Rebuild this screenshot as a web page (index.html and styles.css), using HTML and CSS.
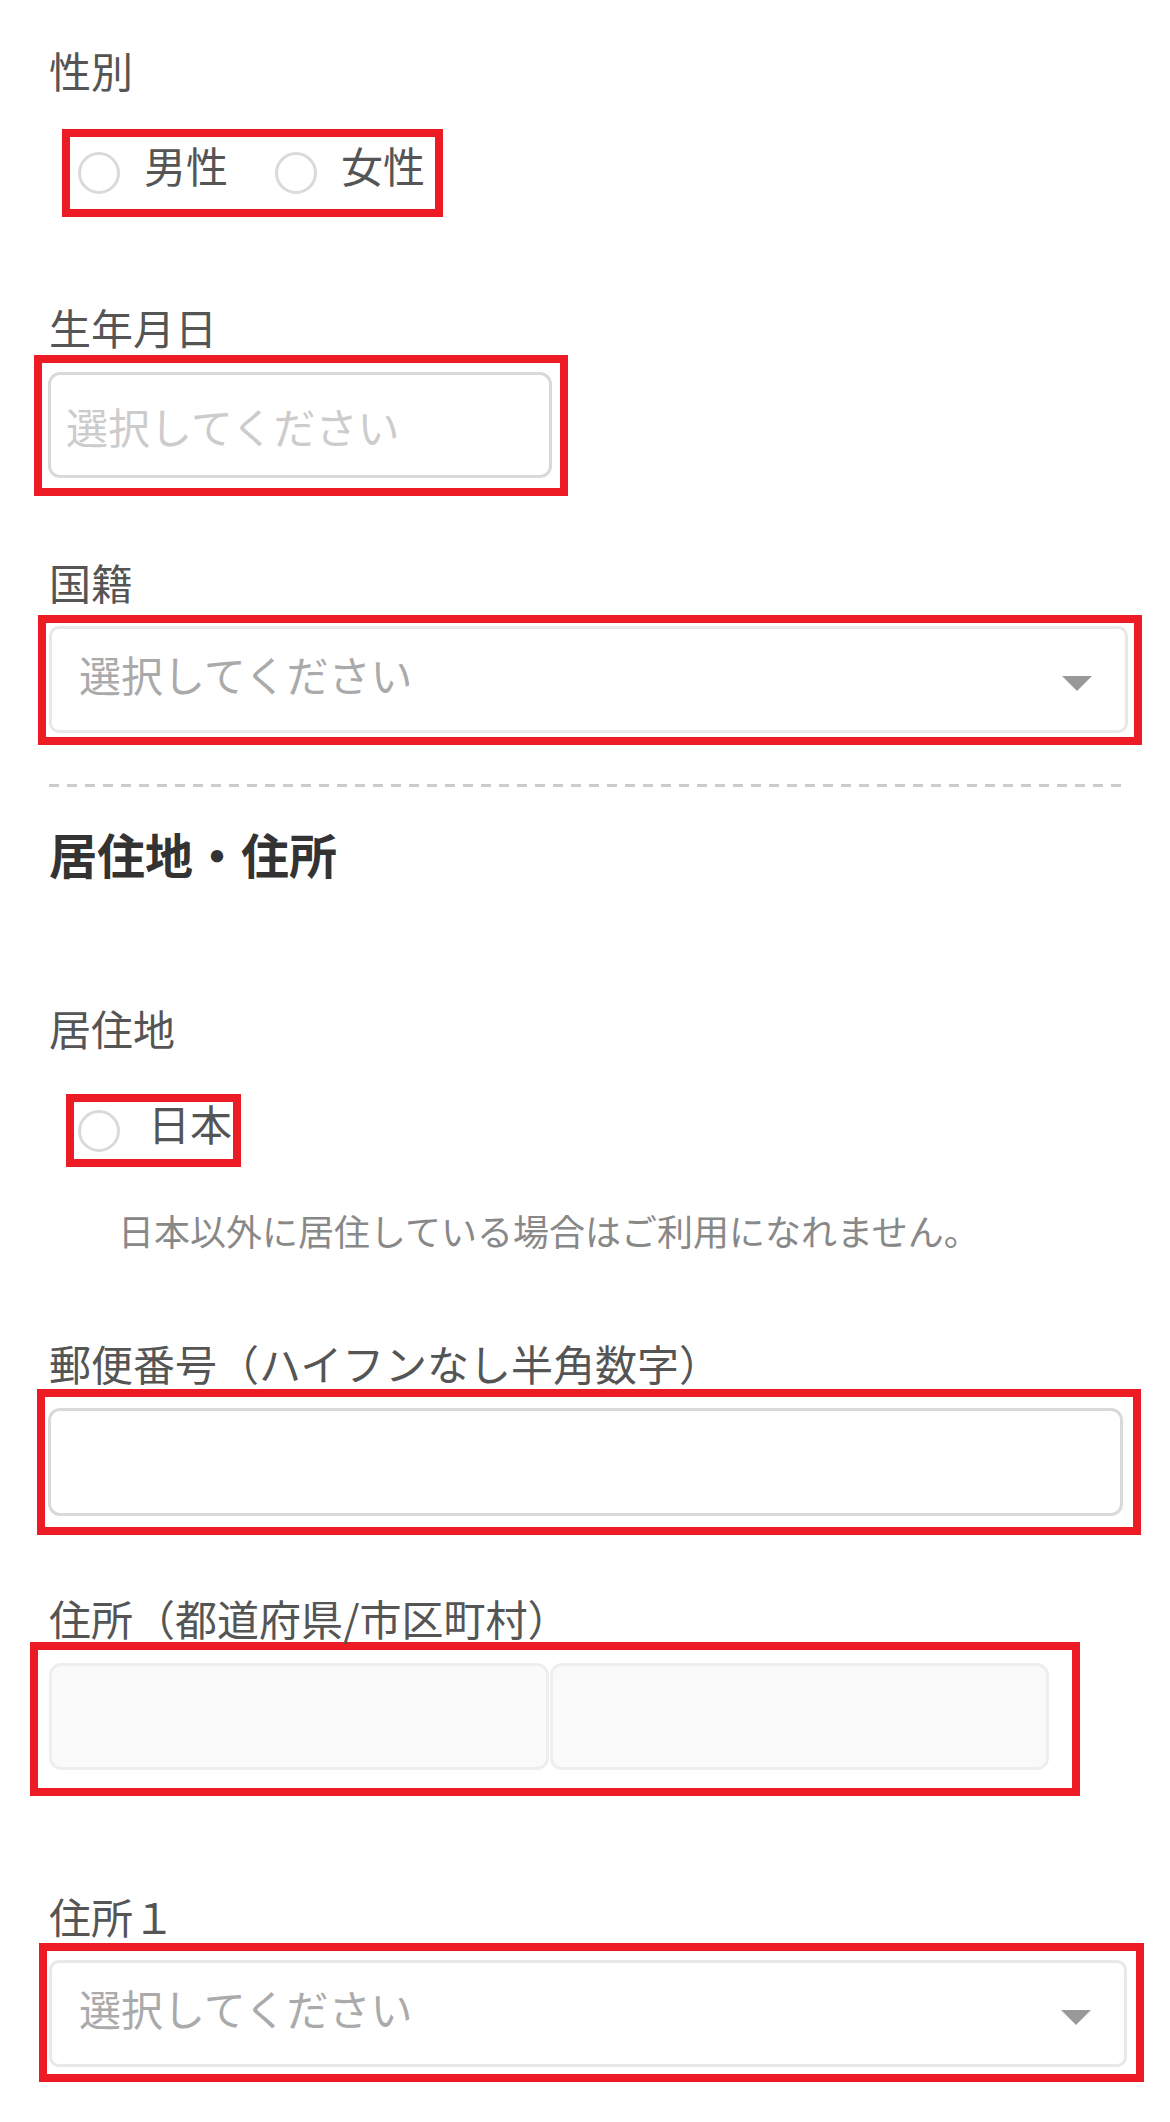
FILE: index.html
```html
<!DOCTYPE html>
<html lang="ja">
<head>
    <meta charset="UTF-8">
    <meta name="viewport" content="width=device-width, initial-scale=1.0">
    <title>会員情報</title>
    <link rel="stylesheet" href="styles.css">
</head>
<body>
    <main class="form">
        <section class="field">
            <p class="label">性別</p>
            <div class="mark gender">
                <label class="radio"><span class="circle"></span><span class="radio-text">男性</span></label>
                <label class="radio"><span class="circle"></span><span class="radio-text">女性</span></label>
            </div>
        </section>

        <section class="field birth">
            <p class="label">生年月日</p>
            <div class="mark birth-mark">
                <input class="text-input" type="text" placeholder="選択してください">
            </div>
        </section>

        <section class="field country">
            <p class="label">国籍</p>
            <div class="mark country-mark">
                <div class="select">
                    <span class="select-text">選択してください</span>
                    <svg class="arrow" width="30" height="15" viewBox="0 0 30 15"><polygon points="0,0 30,0 15,15" fill="#999"/></svg>
                </div>
            </div>
        </section>

        <div class="divider"></div>

        <h2 class="section-title">居住地・住所</h2>

        <section class="field residence">
            <p class="label">居住地</p>
            <div class="mark residence-mark">
                <label class="radio"><span class="circle"></span><span class="radio-text">日本</span></label>
            </div>
            <p class="note">日本以外に居住している場合はご利用になれません。</p>
        </section>

        <section class="field zip">
            <p class="label">郵便番号（ハイフンなし半角数字）</p>
            <div class="mark zip-mark">
                <input class="text-input" type="text">
            </div>
        </section>

        <section class="field pref">
            <p class="label">住所（都道府県/市区町村）</p>
            <div class="mark pref-mark">
                <input class="text-input disabled" type="text" disabled>
                <input class="text-input disabled" type="text" disabled>
            </div>
        </section>

        <section class="field addr">
            <p class="label">住所１</p>
            <div class="mark addr-mark">
                <div class="select">
                    <span class="select-text">選択してください</span>
                    <svg class="arrow" width="30" height="15" viewBox="0 0 30 15"><polygon points="0,0 30,0 15,15" fill="#999"/></svg>
                </div>
            </div>
        </section>
    </main>
</body>
</html>
```

FILE: styles.css
```css
body {
    margin: 0;
    background-color: #fff;
    font-family: "Noto Sans CJK JP", "Noto Sans", sans-serif;
    color: #555;
}

.form {
    width: 1084px;
    padding: 49px 0 40px 49px;
}

.label {
    margin: 0;
    font-size: 42px;
    line-height: 42px;
    color: #555;
}

/* red check frames */
.mark {
    border: 8px solid #ed1c24;
    box-sizing: border-box;
}

/* radios */
.radio {
    display: flex;
    align-items: center;
    gap: 24px;
    font-size: 42px;
    line-height: 42px;
    color: #555;
}

.circle {
    width: 42px;
    height: 42px;
    box-sizing: border-box;
    border: 3px solid #dadada;
    border-radius: 50%;
}

.radio-text {
    margin-bottom: 16px;
}

.gender {
    display: flex;
    align-items: center;
    gap: 47px;
    width: fit-content;
    height: 88px;
    margin: 38px 0 0 13px;
    padding: 0 10px 0 8px;
}

/* inputs */
.text-input {
    display: block;
    width: 100%;
    box-sizing: border-box;
    border: 3px solid #d9d9d9;
    border-radius: 12px;
    padding: 0 15px;
    font-family: inherit;
    font-size: 42px;
    color: #555;
    background: #fff;
    outline: none;
}

.text-input::placeholder {
    color: #ccc;
}

.text-input.disabled {
    background: #fafafa;
    border-color: #eee;
}

.birth {
    margin-top: 89px;
}

.birth-mark {
    width: 534px;
    margin: 7px 0 0 -15px;
    padding: 9px 8px 10px 6px;
}

.birth-mark .text-input {
    height: 106px;
}

/* selects */
.select {
    display: flex;
    align-items: center;
    justify-content: space-between;
    height: 107px;
    box-sizing: border-box;
    border: 3px solid #e8e8e8;
    border-radius: 10px;
    padding: 0 33px 0 27px;
}

.select-text {
    font-size: 42px;
    line-height: 42px;
    color: #aaa;
    margin-bottom: 11px;
}

.arrow {
    display: block;
    margin-top: 8px;
}

.country {
    margin-top: 65px;
}

.country-mark {
    width: 1104px;
    margin: 12px 0 0 -11px;
    padding: 3px 6px 4px 3px;
}

.divider {
    width: 1080px;
    height: 3px;
    margin-top: 39px;
    background: repeating-linear-gradient(90deg, #ccc 0 10px, transparent 10px 18px);
}

.section-title {
    margin: 42px 0 0;
    font-size: 48px;
    line-height: 48px;
    font-weight: 700;
    color: #333;
}

.residence {
    margin-top: 130px;
}

.residence-mark {
    display: flex;
    align-items: center;
    width: fit-content;
    height: 73px;
    margin: 45px 0 0 17px;
    padding: 0 1px 0 4px;
}

.residence-mark .radio {
    gap: 28px;
}

.note {
    margin: 45px 0 0 69px;
    font-size: 36px;
    line-height: 36px;
    color: #888;
}

.zip {
    margin-top: 94px;
}

.zip-mark {
    width: 1104px;
    margin: 5px 0 0 -12px;
    padding: 11px 10px 11px 3px;
}

.zip-mark .text-input {
    height: 108px;
}

.pref {
    margin-top: 62px;
}

.pref-mark {
    display: grid;
    grid-template-columns: 1fr 1fr;
    gap: 1px;
    width: 1050px;
    margin: 3px 0 0 -19px;
    padding: 13px 23px 18px 11px;
}

.pref-mark .text-input {
    height: 107px;
}

.addr {
    margin-top: 99px;
}

.addr-mark {
    width: 1105px;
    margin: 6px 0 0 -10px;
    padding: 9px 9px 7px 2px;
}
```
